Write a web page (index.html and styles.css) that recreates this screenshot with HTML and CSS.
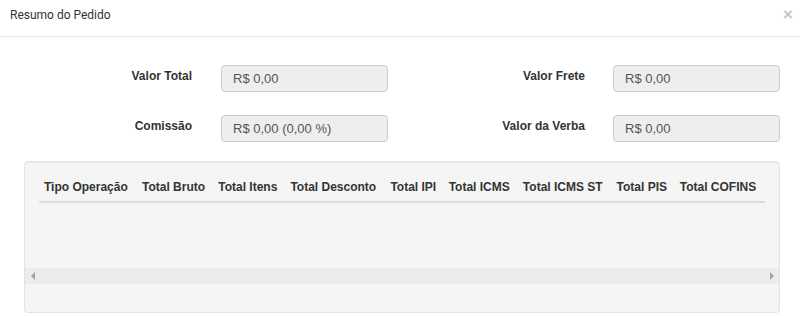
FILE: index.html
```html
<!DOCTYPE html>
<html>
  <head>
    <meta charset="utf-8">
    <link rel="stylesheet" href="styles.css">
  </head>
  <body>
    <div class="modal">
      <div class="modal-header">
        <span class="title">Resumo do Pedido</span>
        <span class="close">&times;</span>
      </div>

      <div class="modal-body">
        <div class="form-grid">
          <label class="label">Valor Total</label>
          <div class="field">R$ 0,00</div>
          <label class="label">Valor Frete</label>
          <div class="field">R$ 0,00</div>

          <label class="label">Comissão</label>
          <div class="field">R$ 0,00 (0,00 %)</div>
          <label class="label">Valor da Verba</label>
          <div class="field">R$ 0,00</div>
        </div>

        <div class="well">
          <div class="table-wrap">
            <table class="totals">
              <thead>
                <tr>
                  <th>Tipo Operação</th>
                  <th>Total Bruto</th>
                  <th>Total Itens</th>
                  <th>Total Desconto</th>
                  <th>Total IPI</th>
                  <th>Total ICMS</th>
                  <th>Total ICMS ST</th>
                  <th>Total PIS</th>
                  <th>Total COFINS</th>
                </tr>
              </thead>
              <tbody></tbody>
            </table>
          </div>
          <div class="hscroll">
            <span class="arrow left"></span>
            <span class="arrow right"></span>
          </div>
        </div>
      </div>
    </div>
  </body>
</html>
```

FILE: styles.css
```css
body { margin: 0; background: #fff; font-family: "Liberation Sans", Arial, sans-serif; font-size: 12px; color: #333 }

.modal-header { height: 37px; border-bottom: 1px solid #e5e5e5; display: flex; align-items: center; justify-content: space-between; padding: 0 7px 0 10px; box-sizing: border-box }
.title { font-family: Roboto, "Liberation Sans", sans-serif; font-size: 12px; color: #333; margin-top: -7px }
.close { font-size: 17px; font-weight: bold; color: #c6c6c6; margin-top: -6px }

.modal-body { padding: 28px 20px 0 0 }

.form-grid { display: grid; grid-template-columns: 221px 167px 225px 167px; row-gap: 23px; align-items: start }
.label { font-weight: bold; text-align: right; padding-top: 3px; line-height: 17px }
.form-grid .label:nth-child(4n+1) { padding-right: 29px }
.form-grid .label:nth-child(4n+3) { padding-right: 28px }
.field { height: 27px; box-sizing: border-box; border: 1px solid #ccc; border-radius: 4px; background: #eee; color: #555; padding: 0 11px; line-height: 25px; font-size: 13px }

.well { margin: 19px 0 0 24px; width: 756px; height: 152px; box-sizing: border-box; background: #f5f5f5; border: 1px solid #e3e3e3; border-radius: 4px; box-shadow: inset 0 1px 1px rgba(0,0,0,.05) }
.table-wrap { padding: 7px 14px 0; height: 106px; box-sizing: border-box }
.totals { width: 100%; border-collapse: collapse }
.totals th { text-align: left; font-weight: bold; padding: 10px 5px 5px; line-height: 17px; border-bottom: 2px solid #ddd; white-space: nowrap }

.hscroll { height: 16px; background: #ececec; display: flex; align-items: center; justify-content: space-between; padding: 0 5px 0 6px }
.arrow { width: 0; height: 0; border-top: 4px solid transparent; border-bottom: 4px solid transparent }
.arrow.left { border-right: 4px solid #a3a3a3 }
.arrow.right { border-left: 4px solid #a3a3a3 }
```
